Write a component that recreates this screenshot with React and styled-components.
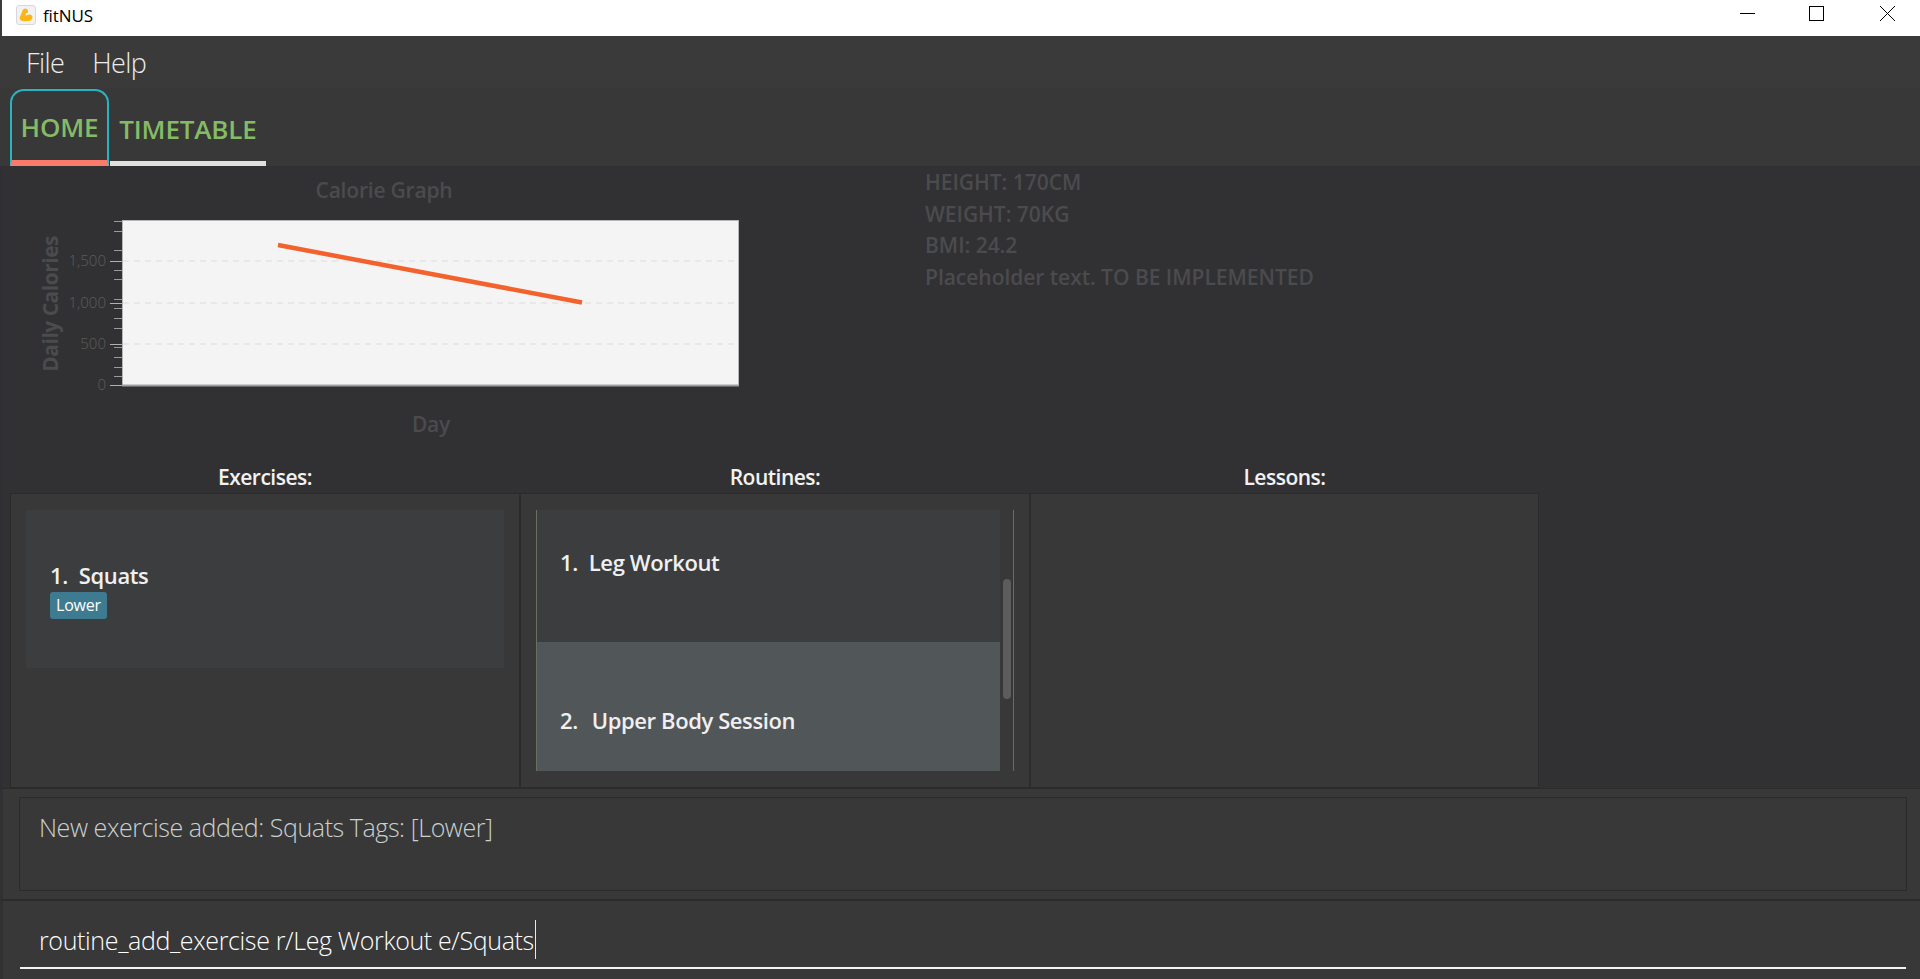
import styled, { createGlobalStyle } from "styled-components";

const GlobalStyle = createGlobalStyle`
    html, body {
        margin: 0;
        height: 100%;
        background: #313133;
        font-family: "Open Sans", "Noto Sans", sans-serif;
    }
    * {
        box-sizing: border-box;
    }
`;

const Window = styled.div`
    width: 1920px;
    height: 979px;
    display: flex;
    flex-direction: column;
    overflow: hidden;
    background: #313133;
`;

const TitleBar = styled.div`
    height: 36px;
    flex: none;
    display: flex;
    align-items: center;
    background: #fff;
    border-left: 2px solid #3a3a3a;
    padding-left: 14px;
`;

const AppName = styled.span`
    margin-left: 7px;
    font-size: 17px;
    letter-spacing: -0.1px;
    color: #000;
    padding-bottom: 6px;
`;

const AppLogo = styled.svg`
    width: 20px;
    height: 20px;
    margin-bottom: 7px;
`;

const WindowControls = styled.div`
    margin-left: auto;
    display: flex;
    height: 100%;
`;

const WindowButton = styled.svg`
    position: relative;
    top: 6px;
    width: 15px;
    height: 15px;
    margin-left: ${(p) => p.$gap}px;
    margin-right: ${(p) => p.$end || 0}px;
`;

const MenuBar = styled.div`
    height: 52px;
    flex: none;
    display: flex;
    align-items: center;
    gap: 28px;
    padding: 0 0 0 26px;
    background: #3a3a3a;
`;

const MenuItem = styled.span`
    font-size: 27px;
    font-weight: 300;
    letter-spacing: -0.6px;
    color: #ececec;
`;

const TabBar = styled.div`
    height: 78px;
    flex: none;
    display: flex;
    align-items: flex-end;
    gap: 1px;
    padding-left: 10px;
    background: #383838;
`;

const Tab = styled.div`
    height: ${(p) => (p.$active ? 77 : 76)}px;
    width: ${(p) => (p.$active ? 99 : 156)}px;
    display: flex;
    align-items: center;
    justify-content: center;
    border: ${(p) => (p.$active ? "2px solid #2bb3c4" : "none")};
    border-bottom: ${(p) => (p.$active ? "6px solid #fa7b6c" : "5px solid #e0e0e0")};
    border-radius: ${(p) => (p.$active ? "14px 14px 0 0" : "0")};
    padding-top: ${(p) => (p.$active ? 2 : 6)}px;
    font-size: 26px;
    font-weight: 600;
    letter-spacing: -0.15px;
    color: #86bb66;
`;

const Body = styled.div`
    flex: 1;
    display: flex;
    flex-direction: column;
    min-height: 0;
    box-shadow: inset 2px 0 0 #2d3032;
`;

const TopRow = styled.div`
    height: 294px;
    flex: none;
    display: flex;
`;

const ChartPane = styled.div`
    width: 925px;
    flex: none;
`;

const ChartTitle = styled.div`
    width: 768px;
    height: 48px;
    line-height: 48px;
    text-align: center;
    font-size: 21px;
    font-weight: 600;
    letter-spacing: -0.2px;
    color: #4b4b4d;
`;

const ChartRow = styled.div`
    height: 186px;
    display: flex;
`;

const YLabel = styled.div`
    width: 66px;
    flex: none;
    display: flex;
    align-items: center;
    justify-content: center;
    padding-left: 34px;
`;

const YLabelText = styled.span`
    margin-top: -7px;
    writing-mode: vertical-rl;
    transform: rotate(180deg);
    white-space: nowrap;
    font-size: 21px;
    font-weight: 700;
    letter-spacing: -0.5px;
    line-height: 24px;
    color: #4b4b4d;
`;

const ChartSvg = styled.svg`
    width: 694px;
    height: 186px;
    flex: none;
`;

const XLabel = styled.div`
    width: 768px;
    height: 48px;
    line-height: 48px;
    padding-left: 94px;
    text-align: center;
    font-size: 21px;
    font-weight: 600;
    letter-spacing: -0.2px;
    color: #4b4b4d;
`;

const Stats = styled.div`
    padding-top: 1px;
    display: flex;
    flex-direction: column;
`;

const StatLine = styled.div`
    height: 31.7px;
    line-height: 31.7px;
    font-size: 21px;
    font-weight: 600;
    letter-spacing: -0.03px;
    color: #4b4b4d;
`;

const Columns = styled.div`
    flex: none;
    width: 1539px;
    padding-left: 11px;
    display: grid;
    grid-template-columns: 508px 508px 507px;
    column-gap: 2px;
`;

const Column = styled.div`
    display: flex;
    flex-direction: column;
`;

const ColumnLabel = styled.div`
    height: 34px;
    line-height: 34px;
    text-align: center;
    font-size: 21px;
    font-weight: 600;
    letter-spacing: -0.5px;
    color: #f2f2f2;
`;

const Panel = styled.div`
    height: 293px;
    padding: 16px 15px;
    background: #383838;
    box-shadow: 0 0 0 1px #2b2b2b;
`;

const ExerciseCard = styled.div`
    height: 158px;
    padding-left: 24px;
    display: flex;
    flex-direction: column;
    justify-content: center;
    align-items: flex-start;
    background: #3c3d3f;
`;

const ItemTitle = styled.div`
    display: flex;
    gap: ${(p) => p.$gap}px;
    height: 30px;
    line-height: 30px;
    font-size: 22px;
    font-weight: 600;
    letter-spacing: -0.4px;
    color: #f0f0f0;
`;

const Tag = styled.div`
    height: 27px;
    line-height: 26px;
    margin-top: 2px;
    padding: 0 6px;
    border-radius: 3px;
    background: #3e7b91;
    font-size: 16px;
    letter-spacing: -0.2px;
    color: #fff;
`;

const RoutineList = styled.div`
    position: relative;
    height: 261px;
    border-left: 1px solid #6a6e5c;
    border-right: 1px solid #6a6e5c;
    padding-right: 13px;
`;

const RoutineRow = styled.div`
    height: ${(p) => p.$height}px;
    padding: ${(p) => p.$top}px 0 0 23px;
    background: ${(p) => (p.$selected ? "#515658" : "#3c3d3f")};
`;

const ScrollThumb = styled.div`
    position: absolute;
    right: 2px;
    top: 69px;
    width: 8px;
    height: 120px;
    border-radius: 4px;
    background: #5c5c5c;
`;

const ResultBar = styled.div`
    height: 113px;
    flex: none;
    margin-top: 1px;
    padding: 8px 13px 8px 19px;
    background: #383838;
    border-left: 3px solid #2f3133;
    border-bottom: 2px solid #2b2b2b;
    border-top: 1px solid #2b2b2b;
`;

const ResultBox = styled.div`
    height: 94px;
    padding-left: 19px;
    margin-left: -3px;
    border: 1px solid #2b2b2b;
    line-height: 58px;
    font-size: 25px;
    font-weight: 300;
    letter-spacing: -0.43px;
    color: #c9d0d0;
`;

const CommandBar = styled.div`
    flex: 1;
    padding: 19px 14px 0 20px;
    background: #383838;
    border-left: 3px solid #2f3133;
`;

const CommandBox = styled.div`
    height: 49px;
    margin-left: -3px;
    padding: 0 0 8px 19px;
    display: flex;
    align-items: center;
    border-bottom: 2px solid #f2f2f2;
    font-size: 25px;
    font-weight: 300;
    letter-spacing: -0.36px;
    color: #fff;
`;

const Caret = styled.span`
    width: 1px;
    height: 39px;
    margin-left: 1px;
    background: #e8e8e8;
`;

const majorTicks = [
    { y: 261, label: "1,500" },
    { y: 303, label: "1,000" },
    { y: 344, label: "500" },
    { y: 385, label: "0" },
];
const minorTicks = [221, 231, 250, 270, 279, 299, 308, 318, 328, 347, 357, 367, 376];

const CalorieChart = () => (
    <ChartSvg viewBox="66 214 694 186">
        <rect x="122.5" y="220.5" width="616" height="165" fill="#f4f4f4" stroke="#b5b5b5" />
        <line x1="122" y1="385.5" x2="739" y2="385.5" stroke="#a0a0a0" strokeWidth="2" />
        {majorTicks.slice(0, 3).map((t) => (
            <line key={t.y} x1="123" y1={t.y} x2="739" y2={t.y} stroke="#dcdcdc" strokeDasharray="6 5" />
        ))}
        {minorTicks.map((y) => (
            <line key={y} x1="114" y1={y + 0.5} x2="122" y2={y + 0.5} stroke="#9a9a9a" />
        ))}
        {majorTicks.map((t) => (
            <g key={t.label}>
                <line x1="110" y1={t.y + 0.5} x2="122" y2={t.y + 0.5} stroke="#b0b0b0" />
                <text
                    x="106"
                    y={t.y + 5}
                    textAnchor="end"
                    fontSize="15"
                    fontWeight="300"
                    fontFamily="Open Sans, sans-serif"
                    fill="#5c5c5c"
                >
                    {t.label}
                </text>
            </g>
        ))}
        <line x1="278" y1="245" x2="582" y2="302.5" stroke="#f3622d" strokeWidth="4.5" />
    </ChartSvg>
);

const App = () => (
    <Window>
        <GlobalStyle />
        <TitleBar>
            <AppLogo viewBox="0 0 20 20">
                <rect x="0.5" y="0.5" width="19" height="19" rx="2.5" fill="#f2f2f2" stroke="#d8d8d8" />
                <path
                    d="M9.5 3.5c-2 .2-3 1.6-3.4 3.3C5.7 8.6 4.5 10.5 3.8 12c-.6 1.4.2 3.6 2.4 3.9 2.6.4 6.6.5 8.4-.3 1.9-.9 2.5-3.4 1.3-5-1.2-1.5-3.7-1.5-5.2-.2-.4.3-1 .2-1.1-.3-.2-.8.2-1.7.8-2.2.7 0 1.5-.3 1.7-1 .3-1.1-.9-3.5-2.6-3.4z"
                    fill="#fdb515"
                />
            </AppLogo>
            <AppName>fitNUS</AppName>
            <WindowControls>
                <WindowButton viewBox="0 0 15 15" $gap={0}>
                    <line x1="0" y1="7.5" x2="15" y2="7.5" stroke="#000" />
                </WindowButton>
                <WindowButton viewBox="0 0 15 15" $gap={54}>
                    <rect x="0.5" y="0.5" width="14" height="14" fill="none" stroke="#000" />
                </WindowButton>
                <WindowButton viewBox="0 0 15 15" $gap={56} $end={25}>
                    <path d="M0 0 15 15M15 0 0 15" fill="none" stroke="#000" />
                </WindowButton>
            </WindowControls>
        </TitleBar>
        <MenuBar>
            <MenuItem>File</MenuItem>
            <MenuItem>Help</MenuItem>
        </MenuBar>
        <TabBar>
            <Tab $active>HOME</Tab>
            <Tab>TIMETABLE</Tab>
        </TabBar>
        <Body>
            <TopRow>
                <ChartPane>
                    <ChartTitle>Calorie Graph</ChartTitle>
                    <ChartRow>
                        <YLabel>
                            <YLabelText>Daily Calories</YLabelText>
                        </YLabel>
                        <CalorieChart />
                    </ChartRow>
                    <XLabel>Day</XLabel>
                </ChartPane>
                <Stats>
                    <StatLine>HEIGHT: 170CM</StatLine>
                    <StatLine>WEIGHT: 70KG</StatLine>
                    <StatLine>BMI: 24.2</StatLine>
                    <StatLine>Placeholder text. TO BE IMPLEMENTED</StatLine>
                </Stats>
            </TopRow>
            <Columns>
                <Column>
                    <ColumnLabel>Exercises:</ColumnLabel>
                    <Panel>
                        <ExerciseCard>
                            <ItemTitle $gap={11}>
                                <span>1.</span>
                                <span>Squats</span>
                            </ItemTitle>
                            <Tag>Lower</Tag>
                        </ExerciseCard>
                    </Panel>
                </Column>
                <Column>
                    <ColumnLabel>Routines:</ColumnLabel>
                    <Panel>
                        <RoutineList>
                            <RoutineRow $height={132} $top={37}>
                                <ItemTitle $gap={11}>
                                    <span>1.</span>
                                    <span>Leg Workout</span>
                                </ItemTitle>
                            </RoutineRow>
                            <RoutineRow $height={129} $selected $top={63}>
                                <ItemTitle $gap={14}>
                                    <span>2.</span>
                                    <span>Upper Body Session</span>
                                </ItemTitle>
                            </RoutineRow>
                            <ScrollThumb />
                        </RoutineList>
                    </Panel>
                </Column>
                <Column>
                    <ColumnLabel>Lessons:</ColumnLabel>
                    <Panel />
                </Column>
            </Columns>
            <ResultBar>
                <ResultBox>New exercise added: Squats Tags: [Lower]</ResultBox>
            </ResultBar>
            <CommandBar>
                <CommandBox>
                    routine_add_exercise r/Leg Workout e/Squats
                    <Caret />
                </CommandBox>
            </CommandBar>
        </Body>
    </Window>
);

export default App;
